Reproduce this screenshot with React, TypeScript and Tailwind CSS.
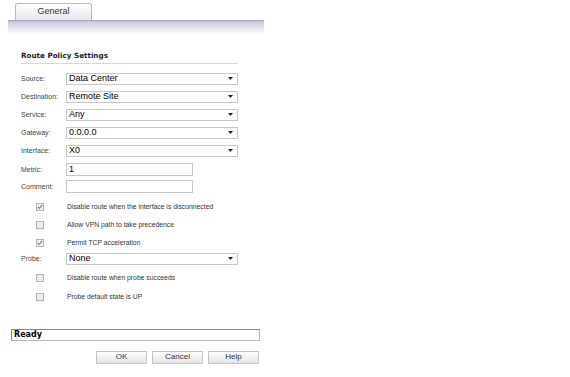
import React from 'react';

const LABEL = "text-[7px] text-[#444] font-['Liberation_Sans',Arial,sans-serif] w-[45px] shrink-0 whitespace-nowrap";

const Select = ({ value }: { value: string }) => (
  <div className="w-[172px] h-[12px] border border-[#c8c8c8] bg-white flex items-center justify-between pl-[2px] pr-[4px]">
    <span className="text-[9px] text-black leading-none font-['Liberation_Sans',Arial,sans-serif]">{value}</span>
    <svg width="5" height="3" viewBox="0 0 5 3">
      <path d="M0 0h5L2.5 3z" fill="#222" />
    </svg>
  </div>
);

const Input = ({ value }: { value: string }) => (
  <div className="w-[127px] h-[13px] border border-[#c8c8c8] bg-white flex items-center pl-[2px]">
    <span className="text-[9px] text-black leading-none font-['Liberation_Sans',Arial,sans-serif]">{value}</span>
  </div>
);

const Check = ({ checked, label, mt = '' }: { checked: boolean; label: string; mt?: string }) => (
  <div className={`flex items-center h-[18px] ${mt}`}>
    <div className="w-[46px] flex justify-start pl-[15px]">
      <div className="w-[8px] h-[8px] border border-[#b4b4b4] bg-[#ececec] flex items-center justify-center">
        {checked && (
          <svg width="6" height="6" viewBox="0 0 6 6">
            <path d="M1 3l1.3 1.5L5 1" stroke="#4a5a8a" strokeWidth="1" fill="none" />
          </svg>
        )}
      </div>
    </div>
    <span className="text-[6.8px] text-[#333] whitespace-nowrap font-['Liberation_Sans',Arial,sans-serif]">{label}</span>
  </div>
);

export default function App() {
  const selects: [string, string][] = [
    ['Source:', 'Data Center'],
    ['Destination:', 'Remote Site'],
    ['Service:', 'Any'],
    ['Gateway:', '0.0.0.0'],
    ['Interface:', 'X0'],
  ];

  return (
    <div className="w-[570px] h-[377px] bg-white flex flex-col">
      <div className="pt-[3px] pl-[15px] flex">
        <div className="w-[77px] h-[17px] border border-b-0 border-[#b8b8c8] rounded-t-[3px] bg-gradient-to-b from-white to-[#e6e6ee] flex items-center justify-center">
          <span className="text-[9px] text-[#333] font-['Liberation_Sans',Arial,sans-serif]">General</span>
        </div>
      </div>
      <div className="ml-[8px] w-[256px] h-[14px] border-t border-[#a4a4bc] bg-gradient-to-b from-[#c6c6da] to-white" />

      <div className="ml-[21px] mt-[17px] w-[217px]">
        <div className="text-[7.2px] font-bold text-[#223] font-['DejaVu_Sans',sans-serif] pb-[1px] border-b border-[#cfd8e2]">
          Route Policy Settings
        </div>

        <div className="mt-[6px] flex flex-col">
          {selects.map(([l, v]) => (
            <div key={l} className="flex items-center h-[18px]">
              <span className={LABEL}>{l}</span>
              <Select value={v} />
            </div>
          ))}
          <div className="flex items-center h-[16px] mt-[2px]">
            <span className={LABEL}>Metric:</span>
            <Input value="1" />
          </div>
          <div className="flex items-center h-[16px] mt-[1px]">
            <span className={LABEL}>Comment:</span>
            <Input value="" />
          </div>
          <Check checked label="Disable route when the interface is disconnected" mt="mt-[3px]" />
          <Check checked={false} label="Allow VPN path to take precedence" />
          <Check checked label="Permit TCP acceleration" />
          <div className="flex items-center h-[14px]">
            <span className={LABEL}>Probe:</span>
            <Select value="None" />
          </div>
          <Check checked={false} label="Disable route when probe succeeds" mt="mt-[3px]" />
          <Check checked={false} label="Probe default state is UP" mt="mt-[1px]" />
        </div>
      </div>

      <div className="ml-[11px] mt-[23px] w-[249px] h-[12px] border border-[#b8b8b8] border-t-[#888] border-l-[#888] flex items-center pl-[2px]">
        <span className="text-[8px] font-bold text-black font-['DejaVu_Sans',sans-serif]">Ready</span>
      </div>

      <div className="mt-[10px] ml-[96px] flex gap-[5px]">
        {['OK', 'Cancel', 'Help'].map((b) => (
          <div
            key={b}
            className="w-[51px] h-[13px] border border-[#c4c4c4] bg-gradient-to-b from-white to-[#e4e4e4] flex items-center justify-center"
          >
            <span className="text-[8px] text-[#334] font-['Liberation_Sans',Arial,sans-serif]">{b}</span>
          </div>
        ))}
      </div>
    </div>
  );
}
